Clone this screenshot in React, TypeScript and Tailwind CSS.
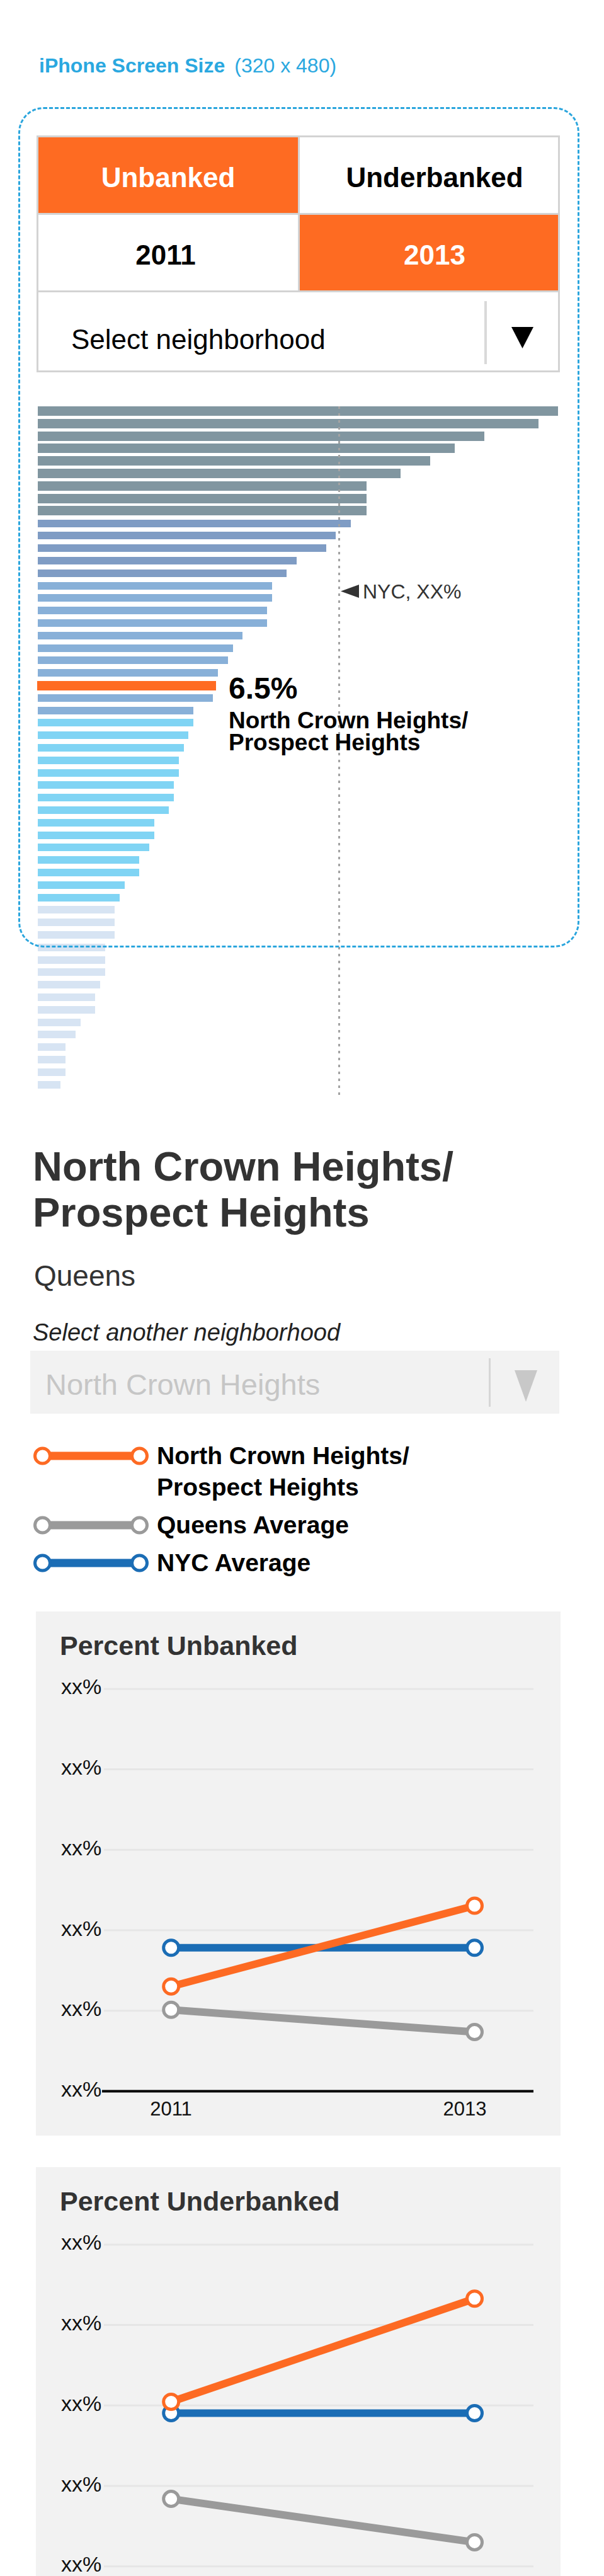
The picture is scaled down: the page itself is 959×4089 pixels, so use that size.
import React from 'react';

const BAR_STYLES: Record<string, string> = {
  g: 'h-[15px] bg-[#8196a0]',
  m: 'h-[12px] bg-[#7f9cc4]',
  l: 'h-[12px] bg-[#88b0d8]',
  o: 'h-[15px] bg-[#ff6b22] -ml-[1px]',
  c: 'h-[12px] bg-[#80d4f4]',
  v: 'h-[12px] bg-[#d7e4f3]',
};

// [width in px, colour group]
const BARS: [number, string][] = [
  [826, 'g'], [795, 'g'], [709, 'g'], [662, 'g'], [623, 'g'], [576, 'g'], [522, 'g'], [522, 'g'], [522, 'g'],
  [497, 'm'], [473, 'm'], [458, 'm'], [411, 'm'], [395, 'm'],
  [372, 'l'], [372, 'l'], [364, 'l'], [364, 'l'], [325, 'l'], [310, 'l'], [302, 'l'], [286, 'l'],
  [284, 'o'],
  [278, 'l'], [247, 'l'],
  [247, 'c'], [239, 'c'], [232, 'c'], [224, 'c'], [224, 'c'], [216, 'c'], [216, 'c'], [208, 'c'],
  [185, 'c'], [185, 'c'], [177, 'c'], [161, 'c'], [161, 'c'], [138, 'c'], [130, 'c'],
  [122, 'v'], [122, 'v'], [122, 'v'], [107, 'v'], [107, 'v'], [107, 'v'], [99, 'v'], [91, 'v'],
  [91, 'v'], [68, 'v'], [60, 'v'], [44, 'v'], [44, 'v'], [44, 'v'], [36, 'v'],
];

const ORANGE = '#fd6a23';
const BLUE = '#1b6db5';
const GRAY = '#9a9a9a';

type Series = { color: string; y1: number; y2: number };

const GRID = [46.9, 174.6, 302.3, 430, 557.7];
const AXIS = 685.4;
const X1 = 214.7;
const X2 = 696.5;

// the second chart runs off the bottom of the screen, so it can be drawn without its axis
function LineChart({ title, series, axis = true }: { title: string; series: Series[]; axis?: boolean }) {
  return (
    <div className={`ml-[5px] w-[833px] bg-[#f2f2f2] pt-[33px] overflow-hidden ${axis ? 'h-[832px]' : 'h-[651px]'}`}>
      <h3 className="ml-[38px] text-[43px] leading-[43px] font-bold text-[#333]">{title}</h3>
      <svg width="833" height={axis ? 756 : 575} className="block" fontFamily="'Liberation Sans', Arial, sans-serif">
        {GRID.map((y) => (
          <line key={y} x1={108} x2={790} y1={y} y2={y} stroke="#e6e6e6" strokeWidth={3} />
        ))}
        {GRID.map((y) => (
          <text key={y} x={40} y={y + 8.5} fontSize={34} fill="#111">xx%</text>
        ))}
        {axis && (
          <g>
            <line x1={105} x2={790} y1={AXIS} y2={AXIS} stroke="#000" strokeWidth={4} />
            <text x={40} y={AXIS + 8.5} fontSize={34} fill="#111">xx%</text>
            <text x={214.5} y={724.3} fontSize={31} fill="#111" textAnchor="middle">2011</text>
            <text x={681} y={724.3} fontSize={31} fill="#111" textAnchor="middle">2013</text>
          </g>
        )}
        {series.map((s) => (
          <g key={s.color}>
            <line x1={X1} y1={s.y1} x2={X2} y2={s.y2} stroke={s.color} strokeWidth={12} />
            <circle cx={X1} cy={s.y1} r={12} fill="#fff" stroke={s.color} strokeWidth={5} />
            <circle cx={X2} cy={s.y2} r={12} fill="#fff" stroke={s.color} strokeWidth={5} />
          </g>
        ))}
      </svg>
    </div>
  );
}

function LegendIcon({ color }: { color: string }) {
  return (
    <svg width="184" height="50" className="shrink-0">
      <line x1={14.5} x2={168.5} y1={25} y2={25} stroke={color} strokeWidth={13} />
      <circle cx={14.5} cy={25} r={12} fill="#fff" stroke={color} strokeWidth={5} />
      <circle cx={168.5} cy={25} r={12} fill="#fff" stroke={color} strokeWidth={5} />
    </svg>
  );
}

export default function App() {
  return (
    <div className="relative w-[959px] h-[4089px] overflow-hidden bg-white font-['Liberation_Sans',Arial,sans-serif]">
      {/* header */}
      <div className="pt-[88px] pl-[62px] text-[32px] leading-[32px] text-[#2aa8e0]">
        <span className="font-bold">iPhone Screen Size</span>
        <span className="ml-[15px] font-light">(320 x 480)</span>
      </div>

      {/* toggles + select */}
      <div className="mt-[95px] ml-[58px] w-[831px] border-[3px] border-[#d3d3d3] text-[44px] leading-[44px]">
        <div className="flex h-[123px] border-b-[3px] border-[#d3d3d3] font-bold">
          <div className="w-[415px] border-r-[3px] border-[#d3d3d3] bg-[#fe6b22] flex items-center justify-center pt-[8px] text-white">
            Unbanked
          </div>
          <div className="flex-1 flex items-center justify-center pt-[8px] pl-[18px] text-black">Underbanked</div>
        </div>
        <div className="flex h-[123px] border-b-[3px] border-[#d3d3d3] font-bold">
          <div className="w-[415px] border-r-[3px] border-[#d3d3d3] flex items-center justify-center pt-[8px] pr-[8px] text-black">
            2011
          </div>
          <div className="flex-1 bg-[#fe6b22] flex items-center justify-center pt-[8px] pl-[18px] text-white">2013</div>
        </div>
        <div className="flex h-[124px] text-black">
          <div className="flex-1 pl-[52px] pt-[53px]">Select neighborhood</div>
          <div className="w-[4px] mt-[14px] mb-[10px] bg-[#d9d9d9]" />
          <div className="w-[113px] pl-[39px] pt-[55px]">
            <svg width="35" height="34" className="block">
              <polygon points="0,0 35,0 17.5,34" fill="#000" />
            </svg>
          </div>
        </div>
      </div>

      {/* bar chart */}
      <div className="relative mt-[51.6px] pl-[60px] flex flex-col">
        {BARS.map(([w, k], i) => (
          <div key={i} className="h-[19.8px] flex items-center">
            <div className={BAR_STYLES[k]} style={{ width: w }} />
          </div>
        ))}
        <svg className="absolute left-[537px] top-[2px]" width="3" height="1097">
          <line x1={1.5} x2={1.5} y1={0} y2={1097} stroke="#a3a3a3" strokeWidth={3} strokeDasharray="4 7" />
        </svg>
        <div className="absolute left-[541px] top-[281px] flex items-center gap-[6px] text-[32px] leading-[30px] text-[#333]">
          <svg width="29" height="21" className="block">
            <polygon points="0,10.5 29,0 29,21" fill="#333" />
          </svg>
          <span>NYC, XX%</span>
        </div>
        <div className="absolute left-[363px] top-[426px] font-bold text-black">
          <div className="text-[48px] leading-[48px]">6.5%</div>
          <div className="mt-[9.6px] text-[37px] leading-[35px]">
            North Crown Heights/
            <br />
            Prospect Heights
          </div>
        </div>
      </div>

      {/* neighborhood detail */}
      <section className="mt-[84px] pl-[52px]">
        <h2 className="text-[65px] leading-[73px] font-bold text-[#333]">
          North Crown Heights/
          <br />
          Prospect Heights
        </h2>
        <p className="mt-[40.5px] ml-[2px] text-[46px] leading-[46px] text-[#333]">Queens</p>
        <p className="mt-[48px] text-[38px] leading-[38px] italic text-[#222]">Select another neighborhood</p>
        <div className="mt-[10.5px] -ml-[4px] w-[840px] h-[100px] bg-[#f2f2f2] flex">
          <div className="flex-1 pl-[24px] pt-[29.3px] text-[47px] leading-[47px] text-[#c6c6c6]">North Crown Heights</div>
          <div className="w-[3px] mt-[11.5px] mb-[11px] bg-[#d6d6d6]" />
          <div className="w-[109px] pl-[38px] pt-[30.5px]">
            <svg width="36" height="50" className="block">
              <polygon points="0,0 36,0 18,50" fill="#c8c8c8" />
            </svg>
          </div>
        </div>

        <div className="mt-[42px] ml-[1px] flex flex-col gap-[10px] text-[39px] leading-[50px] font-bold text-black">
          <div className="flex items-start gap-[12px]">
            <LegendIcon color={ORANGE} />
            <div>
              North Crown Heights/
              <br />
              Prospect Heights
            </div>
          </div>
          <div className="flex items-start gap-[12px]">
            <LegendIcon color={GRAY} />
            <div>Queens Average</div>
          </div>
          <div className="flex items-start gap-[12px]">
            <LegendIcon color={BLUE} />
            <div>NYC Average</div>
          </div>
        </div>

        <div className="mt-[51.5px] flex flex-col gap-[50px]">
          <LineChart
            title="Percent Unbanked"
            series={[
              { color: GRAY, y1: 556.3, y2: 591.6 },
              { color: BLUE, y1: 457.7, y2: 457.7 },
              { color: ORANGE, y1: 519.3, y2: 391 },
            ]}
          />
          <LineChart
            title="Percent Underbanked"
            axis={false}
            series={[
              { color: GRAY, y1: 450.6, y2: 519.4 },
              { color: BLUE, y1: 314.5, y2: 314.5 },
              { color: ORANGE, y1: 296.5, y2: 132.8 },
            ]}
          />
        </div>
      </section>

      {/* iPhone screen outline */}
      <div className="pointer-events-none absolute left-[29px] top-[170px] w-[891px] h-[1334px] rounded-[40px] border-[3px] border-dashed border-[#2aa5dd]" />
    </div>
  );
}
